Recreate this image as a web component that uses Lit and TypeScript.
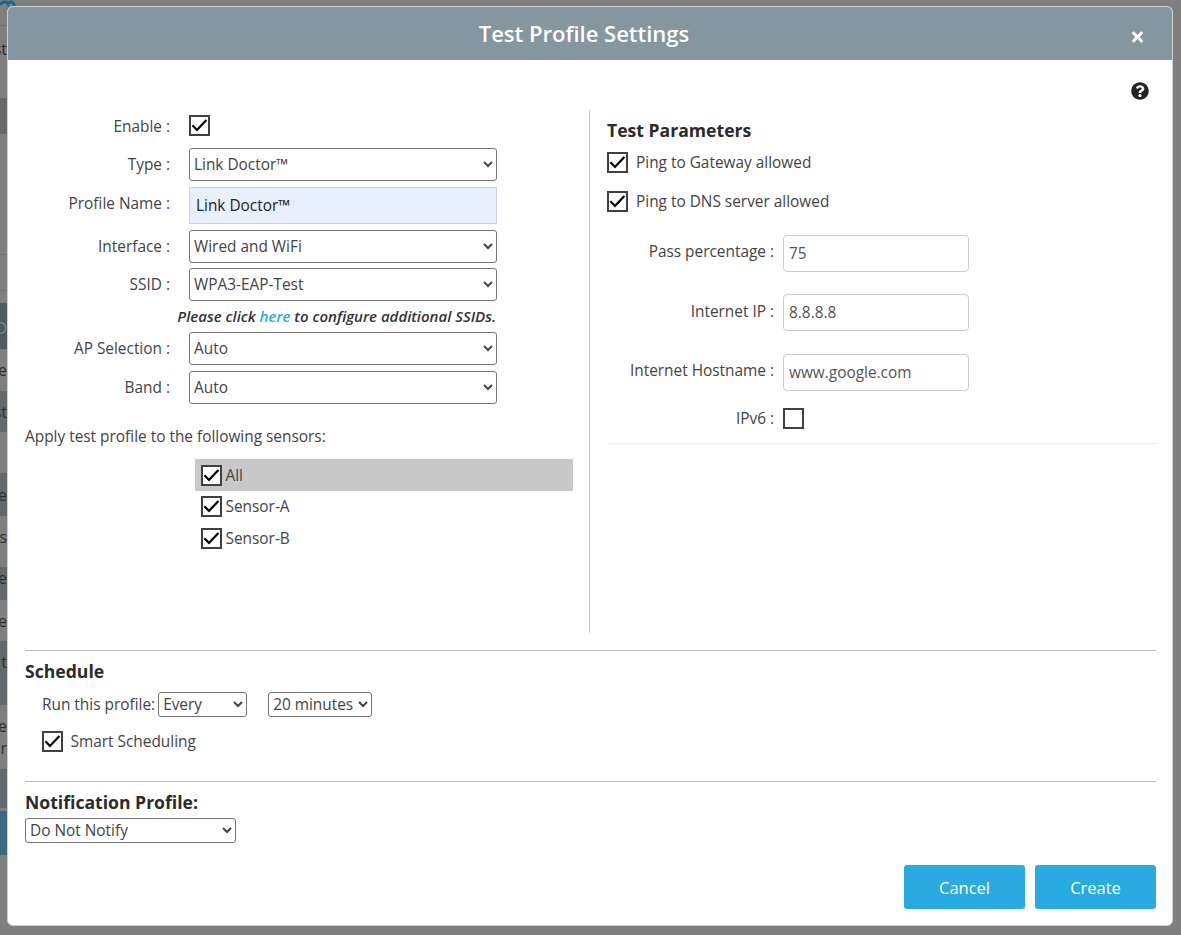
import { LitElement, html, css, svg } from "lit";
import { customElement } from "lit/decorators.js";

type Seg = { h: number; bg?: string; t?: string; c?: string };

const DARK = "#2f2f2f";
const BAND = "#62696d";
const SEGS: Seg[] = [
  { h: 25 },
  { h: 1, bg: "#707070" },
  { h: 46, t: "st", c: "#2a2a2a" },
  { h: 26 },
  { h: 36, bg: "#696969" },
  { h: 120 },
  { h: 1, bg: "#717171" },
  { h: 35 },
  { h: 1, bg: "#717171" },
  { h: 12 },
  { h: 4, bg: "#4f5b62" },
  { h: 42, bg: "#4f5b62", t: "D", c: "#7d8488" },
  { h: 42, t: "e", c: DARK },
  { h: 41, bg: BAND, t: "st", c: DARK },
  { h: 41 },
  { h: 43, bg: BAND, t: "e", c: DARK },
  { h: 10 },
  { h: 22, t: "s", c: DARK },
  { h: 19 },
  { h: 22, bg: BAND, t: "e", c: DARK },
  { h: 11, bg: BAND },
  { h: 41, t: "e", c: DARK },
  { h: 42, bg: BAND, t: "t", c: DARK },
  { h: 22, bg: BAND },
  { h: 10 },
  { h: 22, t: "e", c: DARK },
  { h: 22, t: "r", c: DARK },
  { h: 10 },
  { h: 39, bg: BAND },
  { h: 3 },
  { h: 44, bg: "#3b6a80" },
];

const check = svg`<path d="M3.4 10.2 L8 15 L17.4 4.9" fill="none" stroke="#000" stroke-width="2.2"/>`;

@customElement("app-root")
export class AppRoot extends LitElement {
  static styles = css`
    :host {
      display: block;
      position: relative;
      width: 1181px;
      height: 935px;
      overflow: hidden;
      background: #7f7f7f;
      font-family: "Open Sans", "Liberation Sans", sans-serif;
      font-size: 15.4px;
      color: #333;
    }
    .strip {
      width: 7px;
      overflow: hidden;
      display: flex;
      flex-direction: column;
    }
    .seg {
      display: flex;
      justify-content: flex-end;
      align-items: center;
      font-size: 16px;
      line-height: 1;
      white-space: nowrap;
    }
    .logo {
      position: absolute;
      left: 0;
      top: 0;
      width: 16px;
      height: 12px;
    }
    .modal {
      position: absolute;
      left: 7px;
      top: 6px;
      width: 1166px;
      height: 920px;
      box-sizing: border-box;
      border: 1px solid #cfcfcf;
      border-radius: 6px;
      background: #fff;
      overflow: hidden;
    }
    .head {
      position: relative;
      height: 53px;
      background: #84969f;
      color: #fff;
      display: flex;
      align-items: center;
      justify-content: center;
      font-size: 22px;
      font-weight: 600;
    }
    .head .title { margin-right: 12px; margin-top: -1px; }
    .close {
      position: absolute;
      right: 29px;
      top: 22px;
      width: 11px;
      height: 16px;
      fill: #fff;
    }
    .body { padding: 0 16px 0 17px; }
    .helprow {
      display: flex;
      justify-content: flex-end;
      padding: 22px 7px 0 0;
      height: 28px;
    }
    .help { width: 18px; height: 18px; fill: #222; }
    .cols { display: flex; height: 523px; }
    .left {
      width: 564px;
      flex: none;
      border-right: 1px solid #c8c8c8;
    }
    .right { flex: 1; padding-left: 17px; }
    .row {
      display: grid;
      grid-template-columns: 145px 308px;
      column-gap: 19px;
      align-items: center;
      margin-top: 6px;
    }
    .label { text-align: right; color: #444; white-space: nowrap; }
    .raised { position: relative; top: -2px; }
    .r-enable { margin-top: 5px; }
    .r-enable .label { position: relative; top: 1px; }
    .r-type { margin-top: 12px; }
    .r-ssid { margin-top: 5px; }
    .r-ap { margin-top: 0; }
    select {
      font-family: inherit;
      font-size: 15.4px;
      color: #444;
      background: #fff;
      border: 1px solid #767676;
      border-radius: 3px;
      box-sizing: border-box;
    }
    .sel { width: 308px; height: 33px; }
    input[type="text"] {
      font-family: inherit;
      font-size: 15.4px;
      box-sizing: border-box;
      outline: none;
    }
    .profile {
      width: 308px;
      height: 37px;
      padding: 0 6px;
      color: #222;
      background: #e8f0fe;
      border: 1px solid #ccd2dc;
    }
    .box {
      width: 21px;
      height: 21px;
      flex: none;
      box-sizing: border-box;
      border: 2px solid #404040;
      background: #fff;
      display: block;
    }
    .box svg { display: block; width: 21px; height: 21px; margin: -2px; }
    .note {
      height: 29px;
      padding-bottom: 2px;
      display: flex;
      align-items: center;
      justify-content: flex-end;
      width: 471px;
      font-size: 15px;
      font-style: italic;
      font-weight: 600;
      color: #333;
      white-space: pre;
    }
    .note a { color: #29abe2; text-decoration: none; }
    .apply { margin-top: 22px; color: #444; height: 22px; line-height: 22px; white-space: nowrap; }
    .list { margin: 11px 0 0 170px; width: 378px; }
    .item {
      height: 31.5px;
      box-sizing: border-box;
      padding: 6px 0 0 5.5px;
      display: flex;
      gap: 4px;
      color: #444;
    }
    .item span { line-height: 21px; }
    .item + .item span { position: relative; top: -0.5px; }
    .item.on { background: #c8c8c8; }
    .h3 { font-size: 17.6px; font-weight: 700; color: #2b2b2b; line-height: 24px; }
    .t-params { margin-top: 8px; }
    .chk { display: flex; align-items: center; gap: 8px; color: #444; height: 21px; }
    .chk span { position: relative; top: 1px; }
    .c1 { margin-top: 10px; }
    .c1 span { top: -0.5px; }
    .c2 { margin-top: 17px; }
    .param {
      display: grid;
      grid-template-columns: 167px 186px;
      column-gap: 9px;
      align-items: center;
    }
    .p1 { margin-top: 24px; }
    .p2 { margin-top: 22px; }
    .p2 .label { top: -1px; }
    .p3 { margin-top: 23px; }
    .p4 { margin-top: 17px; }
    .param input {
      width: 186px;
      height: 37px;
      padding: 0 5px 1px;
      color: #555;
      border: 1px solid #ccc;
      border-radius: 4px;
    }
    .thin { border: 0; border-top: 1px solid #eee; margin: 14px 0 0; }
    .rule { border: 0; border-top: 1px solid #bbb; margin: 0; }
    .r1 { margin-top: 17px; }
    .t-sched { margin-top: 8px; }
    .run {
      display: flex;
      align-items: center;
      padding-left: 17px;
      margin-top: 9px;
      color: #444;
    }
    .small { height: 25px; color: #444; padding: 0; }
    .every { width: 89px; margin-left: 3px; }
    .mins { width: 104px; margin-left: 21px; }
    .smart { margin: 13px 0 0 16.5px; }
    .r2 { margin-top: 30px; }
    .t-notif { margin-top: 8px; }
    .notify { display: block; width: 211px; margin-top: 4px; }
    .actions {
      display: flex;
      justify-content: flex-end;
      gap: 10px;
      margin-top: 22px;
    }
    button {
      width: 121px;
      height: 44px;
      border: 0;
      border-radius: 3px;
      background: #29abe2;
      color: #fff;
      font-family: inherit;
      font-size: 16.5px;
    }
  `;

  private box(on: boolean) {
    return html`<span class="box">${on
      ? html`<svg viewBox="0 0 21 21">${check}</svg>`
      : ""}</span>`;
  }

  private sel(value: string) {
    return html`<select class="sel"><option>${value}</option></select>`;
  }

  private row(label: string, cls: string, field: unknown, raised = false) {
    return html`<div class="row ${cls}">
      <div class="label ${raised ? "raised" : ""}">${label}</div>
      ${field}
    </div>`;
  }

  private param(label: string, cls: string, value: string) {
    return html`<div class="param ${cls}">
      <div class="label raised">${label}</div>
      <input type="text" value=${value} />
    </div>`;
  }

  render() {
    return html`
      <div class="strip">
        ${SEGS.map(
          (s) => html`<div
            class="seg"
            style="height:${s.h}px;background:${s.bg ?? "transparent"};color:${s.c ?? "inherit"}"
          >${s.t ?? ""}</div>`
        )}
      </div>
      <svg class="logo" viewBox="0 0 16 12">
        <path d="M0 4.5 C4 1 6 1 8 4 C10 1 13 1 14 5 V11" fill="none" stroke="#0e6a87" stroke-width="3"/>
      </svg>

      <div class="modal">
        <div class="head">
          <span class="title">Test Profile Settings</span>
          <svg class="close" viewBox="0 0 352 512">
            <path d="M242.72 256l100.07-100.07c12.28-12.28 12.28-32.19 0-44.48l-22.24-22.24c-12.28-12.28-32.19-12.28-44.48 0L176 189.28 75.93 89.21c-12.28-12.28-32.19-12.28-44.48 0L9.21 111.45c-12.28 12.28-12.28 32.19 0 44.48L109.28 256 9.21 356.07c-12.28 12.28-12.28 32.19 0 44.48l22.24 22.24c12.28 12.28 32.2 12.28 44.48 0L176 322.72l100.07 100.07c12.28 12.28 32.2 12.28 44.48 0l22.24-22.24c12.28-12.28 12.28-32.19 0-44.48L242.72 256z"/>
          </svg>
        </div>
        <div class="body">
          <div class="helprow">
            <svg class="help" viewBox="0 0 512 512">
              <path d="M504 256c0 136.997-111.043 248-248 248S8 392.997 8 256C8 119.083 119.043 8 256 8s248 111.083 248 248zM262.655 90c-54.497 0-89.255 22.957-116.549 63.758-3.536 5.286-2.353 12.415 2.715 16.258l34.699 26.31c5.205 3.947 12.621 3.008 16.665-2.122 17.864-22.658 30.113-35.797 57.303-35.797 20.429 0 45.698 13.148 45.698 32.958 0 14.976-12.363 22.667-32.534 33.976C247.128 238.528 216 254.941 216 296v4c0 6.627 5.373 12 12 12h56c6.627 0 12-5.373 12-12v-1.333c0-28.462 83.186-29.647 83.186-106.667 0-58.002-60.165-102-116.531-102zM256 338c-25.365 0-46 20.635-46 46 0 25.364 20.635 46 46 46s46-20.636 46-46c0-25.365-20.635-46-46-46z"/>
            </svg>
          </div>
          <div class="cols">
            <div class="left">
              ${this.row("Enable :", "r-enable", this.box(true))}
              ${this.row("Type :", "r-type", this.sel("Link Doctor™"))}
              ${this.row(
                "Profile Name :",
                "",
                html`<input class="profile" type="text" value="Link Doctor™" />`,
                true
              )}
              ${this.row("Interface :", "", this.sel("Wired and WiFi"))}
              ${this.row("SSID :", "r-ssid", this.sel("WPA3-EAP-Test"))}
              <div class="note">Please click <a href="#">here</a> to configure additional SSIDs.</div>
              ${this.row("AP Selection :", "r-ap", this.sel("Auto"))}
              ${this.row("Band :", "", this.sel("Auto"))}
              <div class="apply">Apply test profile to the following sensors:</div>
              <div class="list">
                <div class="item on">${this.box(true)}<span>All</span></div>
                <div class="item">${this.box(true)}<span>Sensor-A</span></div>
                <div class="item">${this.box(true)}<span>Sensor-B</span></div>
              </div>
            </div>
            <div class="right">
              <div class="h3 t-params">Test Parameters</div>
              <div class="chk c1">${this.box(true)}<span>Ping to Gateway allowed</span></div>
              <div class="chk c2">${this.box(true)}<span>Ping to DNS server allowed</span></div>
              ${this.param("Pass percentage :", "p1", "75")}
              ${this.param("Internet IP :", "p2", "8.8.8.8")}
              ${this.param("Internet Hostname :", "p3", "www.google.com")}
              <div class="param p4">
                <div class="label">IPv6 :</div>
                ${this.box(false)}
              </div>
              <hr class="thin" />
            </div>
          </div>
          <hr class="rule r1" />
          <div class="h3 t-sched">Schedule</div>
          <div class="run">
            <span>Run this profile:</span>
            <select class="small every"><option>Every</option></select>
            <select class="small mins"><option>20 minutes</option></select>
          </div>
          <div class="chk smart">${this.box(true)}<span>Smart Scheduling</span></div>
          <hr class="rule r2" />
          <div class="h3 t-notif">Notification Profile:</div>
          <select class="small notify"><option>Do Not Notify</option></select>
          <div class="actions">
            <button>Cancel</button>
            <button>Create</button>
          </div>
        </div>
      </div>
    `;
  }
}
